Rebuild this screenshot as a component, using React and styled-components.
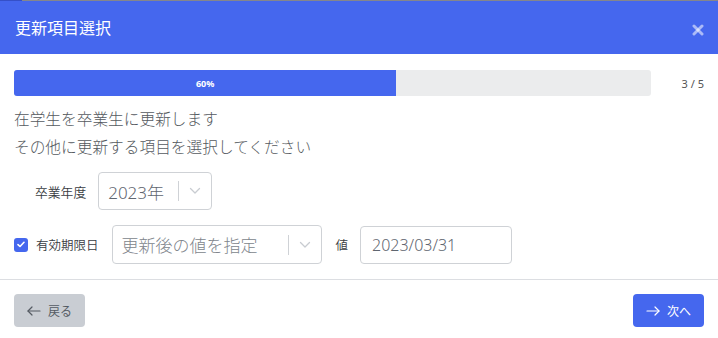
import React from "react";
import styled, { createGlobalStyle } from "styled-components";

const Global = createGlobalStyle`
  html, body { margin: 0; padding: 0; background: #fff; }
  body { font-family: "Noto Sans", "Noto Sans CJK JP", sans-serif; }
  * { box-sizing: border-box; }
`;

const Modal = styled.div`
  width: 718px;
  height: 338px;
  display: flex;
  flex-direction: column;
  background: #fff;
  overflow: hidden;
`;

const TopEdge = styled.div`
  height: 1px;
  background: linear-gradient(to right, #3550c8 22px, #85868c 22px);
`;

const Header = styled.div`
  height: 53px;
  background: #4567ee;
  display: flex;
  align-items: center;
  justify-content: space-between;
  padding: 0 14px 0 15px;
`;

const Title = styled.h1`
  margin: 0;
  font-size: 16px;
  font-weight: 400;
  color: #fff;
  padding-bottom: 2px;
`;

const Close = styled.button`
  border: 0;
  background: transparent;
  padding: 0;
  width: 12px;
  height: 12px;
  display: flex;
  margin-top: 4px;
`;

const Body = styled.div`
  padding: 16px 14px 0 14px;
  display: flex;
  flex-direction: column;
`;

const ProgressRow = styled.div`
  display: flex;
  align-items: center;
`;

const Track = styled.div`
  width: 637px;
  height: 26px;
  border-radius: 3px;
  background: #ebeced;
  overflow: hidden;
  display: flex;
`;

const Fill = styled.div`
  height: 100%;
  background: #4567ee;
  color: #fff;
  font-size: 9px;
  font-weight: 700;
  display: flex;
  align-items: center;
  justify-content: center;
`;

const Step = styled.span`
  margin-left: auto;
  font-size: 11px;
  color: #555;
`;

const Message = styled.p`
  margin: 9px 0 0 0;
  font-size: 15.7px;
  font-weight: 300;
  line-height: 28px;
  color: #555a60;
`;

const Field = styled.div`
  display: flex;
  align-items: center;
  margin-top: ${(p) => p.$mt}px;
  padding-left: ${(p) => p.$pl || 0}px;
`;

const Label = styled.span`
  font-size: ${(p) => p.$fs || 12.5}px;
  font-weight: 350;
  color: #3a3d42;
  margin-right: ${(p) => p.$mr}px;
  margin-left: ${(p) => p.$ml || 0}px;
`;

const Select = styled.div`
  width: ${(p) => p.$w}px;
  height: ${(p) => p.$h}px;
  border: 1px solid #cfd2d6;
  border-radius: 4px;
  display: flex;
  align-items: center;
  background: #fff;
`;

const Value = styled.span`
  flex: 1;
  padding-left: 9px;
  font-size: 17px;
  font-weight: 300;
  color: ${(p) => (p.$placeholder ? "#80858c" : "#5f6670")};
  white-space: nowrap;
`;

const Separator = styled.span`
  width: 1px;
  height: 20px;
  background: #cfd2d6;
`;

const Indicator = styled.span`
  width: 32px;
  display: flex;
  justify-content: center;
  align-items: center;
`;

const Check = styled.span`
  width: 14px;
  height: 14px;
  border-radius: 3px;
  background: #4567ee;
  display: flex;
  align-items: center;
  justify-content: center;
`;

const Input = styled.div`
  width: 152px;
  height: 38px;
  border: 1px solid #cfd2d6;
  border-radius: 4px;
  display: flex;
  align-items: center;
  padding-left: 11px;
  font-size: 16px;
  font-weight: 300;
  color: #5f6670;
`;

const Divider = styled.hr`
  margin: 15px 0 0 0;
  border: 0;
  height: 1px;
  background: #dcdee2;
`;

const Footer = styled.div`
  display: flex;
  justify-content: space-between;
  padding: 14px 14px 0 14px;
`;

const Button = styled.button`
  height: 33px;
  padding: 0 ${(p) => p.$px}px;
  border: 0;
  border-radius: 4px;
  background: ${(p) => (p.$primary ? "#4567ee" : "#c9cdd3")};
  color: ${(p) => (p.$primary ? "#fff" : "#555b63")};
  font-family: "Noto Sans", "Noto Sans CJK JP", sans-serif;
  font-size: 12px;
  display: flex;
  align-items: center;
  gap: 7px;
`;

const Chevron = () => (
  <svg width="12" height="8" viewBox="0 0 12 8">
    <polyline points="1.5,1.5 6,6 10.5,1.5" fill="none" stroke="#c8ccd1" strokeWidth="1.3" strokeLinecap="round" strokeLinejoin="round" />
  </svg>
);

const Arrow = ({ dir, color }) => (
  <svg width="14" height="10" viewBox="0 0 14 10">
    <g fill="none" stroke={color} strokeWidth="1.2" strokeLinecap="round" strokeLinejoin="round">
      <line x1="1" y1="5" x2="13" y2="5" />
      {dir === "left" ? <polyline points="5,1 1,5 5,9" /> : <polyline points="9,1 13,5 9,9" />}
    </g>
  </svg>
);

export default function App() {
  const progress = 60;
  return (
    <>
      <Global />
      <Modal>
        <TopEdge />
        <Header>
          <Title>更新項目選択</Title>
          <Close aria-label="close">
            <svg width="12" height="12" viewBox="0 0 12 12">
              <g stroke="rgba(255,255,255,0.55)" strokeWidth="3" strokeLinecap="round">
                <line x1="2" y1="2" x2="10" y2="10" />
                <line x1="10" y1="2" x2="2" y2="10" />
              </g>
            </svg>
          </Close>
        </Header>
        <Body>
          <ProgressRow>
            <Track>
              <Fill style={{ width: `${progress}%` }}>60%</Fill>
            </Track>
            <Step>3 / 5</Step>
          </ProgressRow>
          <Message>
            在学生を卒業生に更新します
            <br />
            その他に更新する項目を選択してください
          </Message>
          <Field $mt={11} $pl={21}>
            <Label $fs={12.8} $mr={12}>卒業年度</Label>
            <Select $w={114} $h={38}>
              <Value>2023年</Value>
              <Separator />
              <Indicator>
                <Chevron />
              </Indicator>
            </Select>
          </Field>
          <Field $mt={15}>
            <Check>
              <svg width="8" height="7" viewBox="0 0 8 7">
                <polyline points="1,3.6 3,5.5 7,1.3" fill="none" stroke="#fff" strokeWidth="1.6" strokeLinecap="round" strokeLinejoin="round" />
              </svg>
            </Check>
            <Label $ml={8} $mr={13}>有効期限日</Label>
            <Select $w={210} $h={39}>
              <Value $placeholder>更新後の値を指定</Value>
              <Separator />
              <Indicator>
                <Chevron />
              </Indicator>
            </Select>
            <Label $ml={14} $mr={12}>値</Label>
            <Input>2023/03/31</Input>
          </Field>
        </Body>
        <Divider />
        <Footer>
          <Button $px={13}>
            <Arrow dir="left" color="#555b63" />
            戻る
          </Button>
          <Button $primary $px={13}>
            <Arrow dir="right" color="#fff" />
            次へ
          </Button>
        </Footer>
      </Modal>
    </>
  );
}
